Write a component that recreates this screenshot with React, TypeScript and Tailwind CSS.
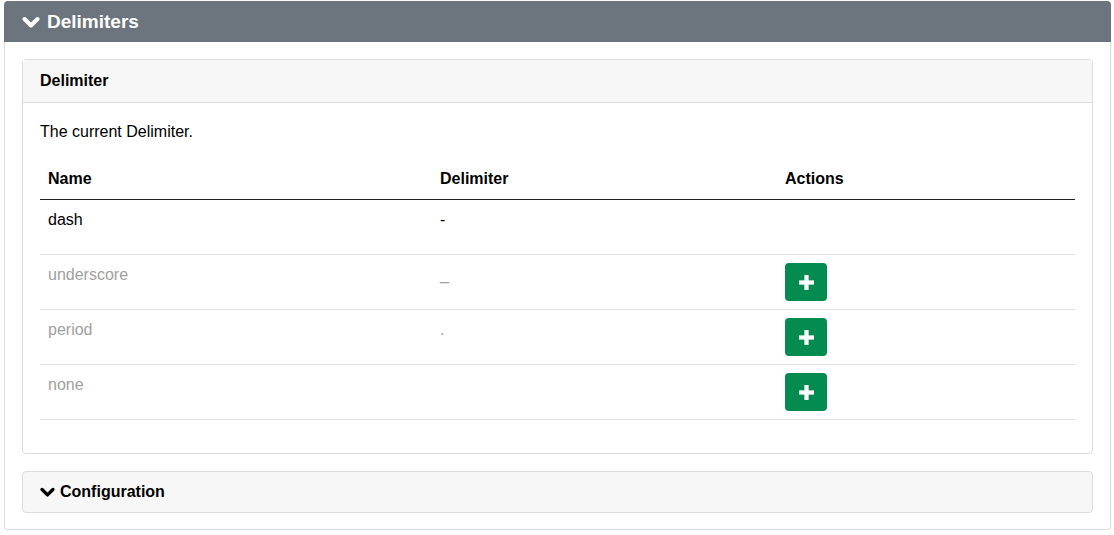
import React from 'react';

interface DelimiterRow {
  name: string;
  value: string;
  current: boolean;
}

const rows: DelimiterRow[] = [
  { name: 'dash', value: '-', current: true },
  { name: 'underscore', value: '_', current: false },
  { name: 'period', value: '.', current: false },
  { name: 'none', value: '', current: false },
];

function Chevron({ className }: { className?: string }) {
  return (
    <svg viewBox="0 0 18 12" className={className} fill="none">
      <path d="M2.5 3 L9 9.5 L15.5 3" stroke="currentColor" strokeWidth="4" strokeLinecap="round" strokeLinejoin="round" />
    </svg>
  );
}

function PlusButton() {
  return (
    <button className="w-[42px] h-[38px] rounded-[4px] bg-[#048c50] flex items-center justify-center">
      <svg viewBox="0 0 16 16" className="w-[17px] h-[17px]" fill="#fff">
        <rect x="6" y="1" width="4" height="14" />
        <rect x="1" y="6" width="14" height="4" />
      </svg>
    </button>
  );
}

export default function App() {
  return (
    <div className="w-[1114px] h-[535px] bg-white pt-[1px] pl-[4px] text-[16px] text-black" style={{ fontFamily: '"Liberation Sans", Arial, sans-serif' }}>
      <div className="w-[1107px]">
        {/* Top panel header */}
        <div className="h-[41px] bg-[#6c757d] rounded-t-[4px] flex items-center pl-[18px] pt-[1px] text-white">
          <Chevron className="w-[18px] h-[12px] mr-[7px]" />
          <span className="font-bold text-[19px]">Delimiters</span>
        </div>

        <div className="border-x border-b border-[#dddddd] rounded-b-[4px] px-[17px] pt-[17px] pb-[16px]">
          {/* Delimiter card */}
          <div className="border border-[#dcdcdc] rounded-[4px]">
            <div className="bg-[#f7f7f7] border-b border-[#dcdcdc] px-[17px] py-[9px] leading-[24px] font-bold">
              Delimiter
            </div>
            <div className="px-[17px] pt-[17px] pb-[17px]">
              <p className="leading-[24px] mb-[15px]">The current Delimiter.</p>
              <div className="mb-4">
                <div className="grid grid-cols-[392px_345px_1fr] border-b border-[#222]">
                  <div className="px-2 py-2 leading-[24px] font-bold">Name</div>
                  <div className="px-2 py-2 leading-[24px] font-bold">Delimiter</div>
                  <div className="px-2 py-2 leading-[24px] font-bold">Actions</div>
                </div>
                {rows.map((row) => (
                  <div key={row.name} className="grid grid-cols-[392px_345px_1fr] h-[55px] border-b border-[#e2e2e2]">
                    <div className={`px-2 py-2 leading-[24px] ${row.current ? 'text-black' : 'text-[#a0a0a0]'}`}>{row.name}</div>
                    <div className={`px-2 py-2 leading-[24px] ${row.current ? 'text-black' : 'text-[#a0a0a0]'}`}>{row.value}</div>
                    <div className="px-2 py-2">{!row.current && <PlusButton />}</div>
                  </div>
                ))}
              </div>
            </div>
          </div>

          {/* Configuration card */}
          <div className="mt-[17px] h-[42px] bg-[#f7f7f7] border border-[#dcdcdc] rounded-[4px] flex items-center pl-[17px] font-bold">
            <Chevron className="w-[15px] h-[10px] mr-[5px]" />
            <span>Configuration</span>
          </div>
        </div>
      </div>
    </div>
  );
}
